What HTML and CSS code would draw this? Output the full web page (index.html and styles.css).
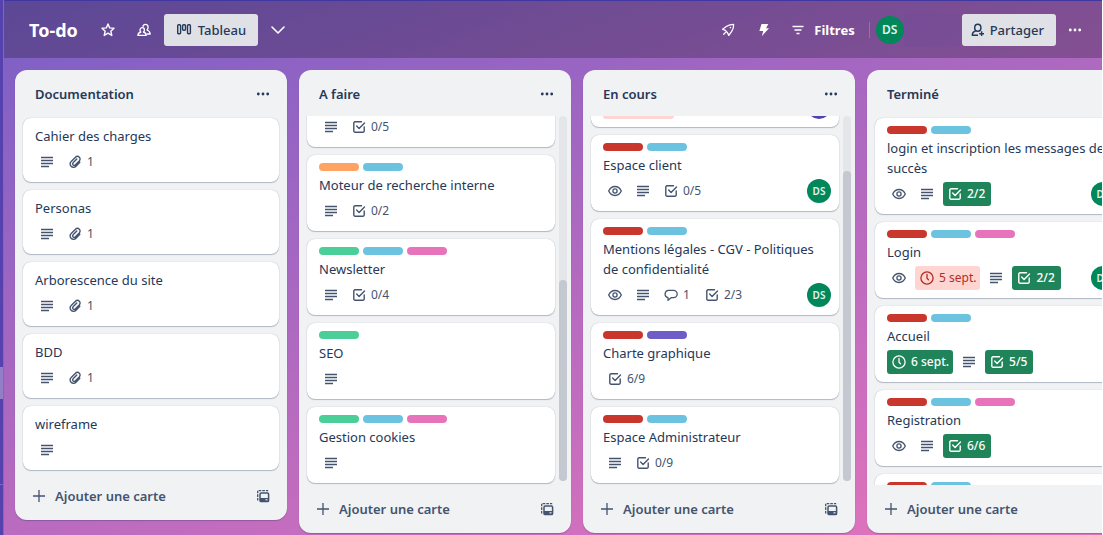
FILE: index.html
```html
<!DOCTYPE html>
<html lang="fr">
<head>
<meta charset="utf-8">
<title>To-do</title>
<link rel="stylesheet" href="styles.css">
</head>
<body>
<svg class="sprite" aria-hidden="true">
  <symbol id="desc" viewBox="0 0 16 16"><path d="M2 3.500h12M2 6.500h12M2 9.500h12M2 12.500h8" stroke="currentColor" stroke-width="1.300" fill="none"/></symbol>
  <symbol id="clip" viewBox="0 0 16 16"><path d="M12.800 8.300 9 12.200a3.300 3.300 0 0 1-4.900.1 3.300 3.300 0 0 1 .1-4.800L8.500 3.200a2.500 2.500 0 0 1 3.800 0 2.600 2.600 0 0 1 0 3.700L8.300 11a1.500 1.500 0 0 1-2.200-2.200L9.800 5.100" stroke="currentColor" stroke-width="1.400" fill="none" stroke-linecap="round"/></symbol>
  <symbol id="check" viewBox="0 0 16 16"><path d="M10.500 2.800H4A1.200 1.200 0 0 0 2.800 4v8A1.200 1.200 0 0 0 4 13.200h8a1.200 1.200 0 0 0 1.200-1.200V8" stroke="currentColor" stroke-width="1.400" fill="none" stroke-linecap="round"/><path d="m5.700 7 2.400 2.600L13.500 4" stroke="currentColor" stroke-width="1.400" fill="none" stroke-linecap="round" stroke-linejoin="round"/></symbol>
  <symbol id="eye" viewBox="0 0 16 16"><path d="M1.700 8C3 5.200 5.300 3.500 8 3.500S13 5.200 14.300 8C13 10.800 10.700 12.500 8 12.500S3 10.800 1.700 8Z" stroke="currentColor" stroke-width="1.300" fill="none"/><circle cx="8" cy="8" r="2.100" stroke="currentColor" stroke-width="1.300" fill="none"/></symbol>
  <symbol id="comment" viewBox="0 0 16 16"><path d="M5.500 3.300h5a3.700 3.700 0 0 1 0 7.400H8.200L5 13.300v-2.700a3.700 3.700 0 0 1 .5-7.300Z" stroke="currentColor" stroke-width="1.300" fill="none" stroke-linejoin="round"/></symbol>
  <symbol id="clock" viewBox="0 0 16 16"><circle cx="8" cy="8" r="6.100" stroke="currentColor" stroke-width="1.300" fill="none"/><path d="M8 4.300v4l1.500 1.500" stroke="currentColor" stroke-width="1.300" fill="none" stroke-linecap="round"/></symbol>
  <symbol id="dots" viewBox="0 0 16 16"><circle cx="3.300" cy="8" r="1.400" fill="currentColor"/><circle cx="8" cy="8" r="1.400" fill="currentColor"/><circle cx="12.700" cy="8" r="1.400" fill="currentColor"/></symbol>
  <symbol id="plus" viewBox="0 0 16 16"><path d="M8 2v12M2 8h12" stroke="currentColor" stroke-width="1.300"/></symbol>
  <symbol id="template" viewBox="0 0 16 16"><path d="M2.700 12.500V2.700h10.500" stroke="currentColor" stroke-width="1.300" stroke-dasharray="2.600 1" fill="none"/><rect x="5" y="5" width="8.600" height="8.600" rx="1.200" stroke="currentColor" stroke-width="1.500" fill="none"/><path d="M5 10h8.600v3.600H5z" fill="currentColor"/><path d="M10.500 11.800h2" stroke="#f1f2f4" stroke-width="1.100"/></symbol>
  <symbol id="star" viewBox="0 0 16 16"><path d="m8 1.900 1.700 4 4.300.4-3.200 2.900 1 4.300L8 11.200l-3.800 2.300 1-4.300L2 6.300l4.300-.4L8 1.900Z" stroke="currentColor" stroke-width="1.400" fill="none" stroke-linejoin="round"/></symbol>
  <symbol id="people" viewBox="0 0 16 16"><path d="M6.300 5.700c1.300 0 2.100 1 2.100 2.200 0 .9-.4 1.600-1 2.100 1.800.5 2.800 1.700 2.900 3.400H1.900c.1-1.700 1.100-2.900 3-3.400-.6-.5-.9-1.200-.9-2.100 0-1.200.9-2.200 2.300-2.200Z" stroke="currentColor" stroke-width="1.300" fill="none" stroke-linejoin="round"/><path d="M6.900 4.800c.2-1.600 1.200-2.500 2.600-2.500 1.600 0 2.600 1.200 2.600 3 0 1.100-.4 2-1.100 2.700 1.900.6 3 1.900 3.200 4h-3.500" stroke="currentColor" stroke-width="1.300" fill="none" stroke-linejoin="round"/></symbol>
  <symbol id="board" viewBox="0 0 16 16"><g stroke="currentColor" stroke-width="1.400" fill="none"><rect x="1.700" y="2.700" width="2.900" height="9" rx="1"/><rect x="6.600" y="2.700" width="2.900" height="5.600" rx="1"/><rect x="11.500" y="2.700" width="2.900" height="9" rx="1"/></g></symbol>
  <symbol id="chevron" viewBox="0 0 16 16"><path d="m2 5 6 6 6-6" stroke="currentColor" stroke-width="1.600" fill="none" stroke-linecap="round" stroke-linejoin="round"/></symbol>
  <symbol id="rocket" viewBox="0 0 16 16"><path d="M13.600 2.300c.2 2.700-.4 5-1.900 7L8.800 13.400 7.500 10.700 5.300 8.400 2.500 7.200 6.700 4.300c1.900-1.300 4.200-2 6.900-2Z" stroke="currentColor" stroke-width="1.300" fill="none" stroke-linejoin="round"/><path d="m5.600 10.400-1.900 1.900" stroke="currentColor" stroke-width="1.300" stroke-linecap="round"/><circle cx="10.400" cy="5.600" r=".8" fill="currentColor"/></symbol>
  <symbol id="bolt" viewBox="0 0 16 16"><path d="M5.500 2h6.800L10 6.200h3L5.800 14.300 7.200 9H3.400Z" fill="currentColor"/></symbol>
  <symbol id="filter" viewBox="0 0 16 16"><path d="M2.500 4.500h11M4.500 8h7M6.500 11.500h3" stroke="currentColor" stroke-width="1.300"/></symbol>
  <symbol id="invite" viewBox="0 0 16 16"><path d="M8 13.300H2.300c0-2.300 1.100-3.700 3.300-4.300" stroke="currentColor" stroke-width="1.500" fill="none" stroke-linejoin="round"/><ellipse cx="7.800" cy="5.800" rx="3.100" ry="3.500" stroke="currentColor" stroke-width="1.500" fill="none"/><path d="M11.600 9.300v4.800M9.200 11.700H14" stroke="currentColor" stroke-width="1.400"/></symbol>
</svg>

<div class="app">
  <nav class="rail" aria-label="Espace de travail"><span class="rail-current"></span><span class="rail-line"></span></nav>
  <div class="workspace">
    <header class="topbar">
      <h1 class="board-name">To-do</h1>
      <button class="ghost" aria-label="Favori"><svg class="icon"><use href="#star"/></svg></button>
      <button class="ghost" aria-label="Visibilité"><svg class="icon"><use href="#people"/></svg></button>
      <button class="solid view"><svg class="icon"><use href="#board"/></svg>Tableau</button>
      <button class="ghost chevron" aria-label="Vues"><svg class="icon"><use href="#chevron"/></svg></button>
      <div class="tools">
        <button class="ghost" aria-label="Power-ups"><svg class="icon"><use href="#rocket"/></svg></button>
        <button class="ghost" aria-label="Automatisation"><svg class="icon"><use href="#bolt"/></svg></button>
        <button class="ghost filters"><svg class="icon"><use href="#filter"/></svg>Filtres</button>
        <span class="divider"></span>
        <span class="avatar avatar-large">DS</span>
        <span class="members"></span>
        <button class="solid share"><svg class="icon"><use href="#invite"/></svg>Partager</button>
        <button class="ghost more" aria-label="Menu"><svg class="icon"><use href="#dots"/></svg></button>
      </div>
    </header>

    <main class="board">
      <section class="list">
        <header class="list-head"><h2>Documentation</h2><button aria-label="Actions"><svg class="icon"><use href="#dots"/></svg></button></header>
        <div class="list-body"><div class="cards">
          <article class="card"><h3>Cahier des charges</h3><div class="badges"><span class="badge"><svg class="icon"><use href="#desc"/></svg></span><span class="badge"><svg class="icon"><use href="#clip"/></svg>1</span></div></article>
          <article class="card"><h3>Personas</h3><div class="badges"><span class="badge"><svg class="icon"><use href="#desc"/></svg></span><span class="badge"><svg class="icon"><use href="#clip"/></svg>1</span></div></article>
          <article class="card"><h3>Arborescence du site</h3><div class="badges"><span class="badge"><svg class="icon"><use href="#desc"/></svg></span><span class="badge"><svg class="icon"><use href="#clip"/></svg>1</span></div></article>
          <article class="card"><h3>BDD</h3><div class="badges"><span class="badge"><svg class="icon"><use href="#desc"/></svg></span><span class="badge"><svg class="icon"><use href="#clip"/></svg>1</span></div></article>
          <article class="card"><h3>wireframe</h3><div class="badges"><span class="badge"><svg class="icon"><use href="#desc"/></svg></span></div></article>
        </div></div>
        <footer class="list-foot"><button class="add"><svg class="icon"><use href="#plus"/></svg>Ajouter une carte</button><button class="template" aria-label="Modèle"><svg class="icon"><use href="#template"/></svg></button></footer>
      </section>

      <section class="list">
        <header class="list-head"><h2>A faire</h2><button aria-label="Actions"><svg class="icon"><use href="#dots"/></svg></button></header>
        <div class="list-body"><div class="cards cards-end">
          <article class="card"><div class="badges"><span class="badge"><svg class="icon"><use href="#desc"/></svg></span><span class="badge count"><svg class="icon"><use href="#check"/></svg>0/5</span></div></article>
          <article class="card"><div class="labels"><i class="orange"></i><i class="sky"></i></div><h3>Moteur de recherche interne</h3><div class="badges"><span class="badge"><svg class="icon"><use href="#desc"/></svg></span><span class="badge count"><svg class="icon"><use href="#check"/></svg>0/2</span></div></article>
          <article class="card"><div class="labels"><i class="green"></i><i class="sky"></i><i class="pink"></i></div><h3>Newsletter</h3><div class="badges"><span class="badge"><svg class="icon"><use href="#desc"/></svg></span><span class="badge count"><svg class="icon"><use href="#check"/></svg>0/4</span></div></article>
          <article class="card"><div class="labels"><i class="green"></i></div><h3>SEO</h3><div class="badges"><span class="badge"><svg class="icon"><use href="#desc"/></svg></span></div></article>
          <article class="card"><div class="labels"><i class="green"></i><i class="sky"></i><i class="pink"></i></div><h3>Gestion cookies</h3><div class="badges"><span class="badge"><svg class="icon"><use href="#desc"/></svg></span></div></article>
        </div><div class="scrollbar"><span style="height:55%"></span></div></div>
        <footer class="list-foot"><button class="add"><svg class="icon"><use href="#plus"/></svg>Ajouter une carte</button><button class="template" aria-label="Modèle"><svg class="icon"><use href="#template"/></svg></button></footer>
      </section>

      <section class="list">
        <header class="list-head"><h2>En cours</h2><button aria-label="Actions"><svg class="icon"><use href="#dots"/></svg></button></header>
        <div class="list-body"><div class="cards cards-end">
          <article class="card"><div class="badges"><span class="badge late date-tail"></span><span class="avatar violet"></span></div></article>
          <article class="card"><div class="labels"><i class="red"></i><i class="sky"></i></div><h3>Espace client</h3><div class="badges"><span class="badge"><svg class="icon"><use href="#eye"/></svg></span><span class="badge"><svg class="icon"><use href="#desc"/></svg></span><span class="badge count"><svg class="icon"><use href="#check"/></svg>0/5</span><span class="avatar">DS</span></div></article>
          <article class="card"><div class="labels"><i class="red"></i><i class="sky"></i></div><h3>Mentions légales - CGV - Politiques de confidentialité</h3><div class="badges"><span class="badge"><svg class="icon"><use href="#eye"/></svg></span><span class="badge"><svg class="icon"><use href="#desc"/></svg></span><span class="badge count"><svg class="icon"><use href="#comment"/></svg>1</span><span class="badge count"><svg class="icon"><use href="#check"/></svg>2/3</span><span class="avatar">DS</span></div></article>
          <article class="card"><div class="labels"><i class="red"></i><i class="purple"></i></div><h3>Charte graphique</h3><div class="badges"><span class="badge count"><svg class="icon"><use href="#check"/></svg>6/9</span></div></article>
          <article class="card"><div class="labels"><i class="red"></i><i class="sky"></i></div><h3>Espace Administrateur</h3><div class="badges"><span class="badge"><svg class="icon"><use href="#desc"/></svg></span><span class="badge count"><svg class="icon"><use href="#check"/></svg>0/9</span></div></article>
        </div><div class="scrollbar"><span style="height:85%"></span></div></div>
        <footer class="list-foot"><button class="add"><svg class="icon"><use href="#plus"/></svg>Ajouter une carte</button><button class="template" aria-label="Modèle"><svg class="icon"><use href="#template"/></svg></button></footer>
      </section>

      <section class="list">
        <header class="list-head"><h2>Terminé</h2></header>
        <div class="list-body"><div class="cards">
          <article class="card"><div class="labels"><i class="red"></i><i class="sky"></i></div><h3>login et inscription les messages de succès</h3><div class="badges"><span class="badge"><svg class="icon"><use href="#eye"/></svg></span><span class="badge"><svg class="icon"><use href="#desc"/></svg></span><span class="badge count done"><svg class="icon"><use href="#check"/></svg>2/2</span><span class="avatar">DS</span></div></article>
          <article class="card"><div class="labels"><i class="red"></i><i class="sky"></i><i class="pink"></i></div><h3>Login</h3><div class="badges"><span class="badge"><svg class="icon"><use href="#eye"/></svg></span><span class="badge late"><svg class="icon"><use href="#clock"/></svg>5 sept.</span><span class="badge"><svg class="icon"><use href="#desc"/></svg></span><span class="badge count done"><svg class="icon"><use href="#check"/></svg>2/2</span><span class="avatar">DS</span></div></article>
          <article class="card"><div class="labels"><i class="red"></i><i class="sky"></i></div><h3>Accueil</h3><div class="badges"><span class="badge done"><svg class="icon"><use href="#clock"/></svg>6 sept.</span><span class="badge"><svg class="icon"><use href="#desc"/></svg></span><span class="badge count done"><svg class="icon"><use href="#check"/></svg>5/5</span></div></article>
          <article class="card"><div class="labels"><i class="red"></i><i class="sky"></i><i class="pink"></i></div><h3>Registration</h3><div class="badges"><span class="badge"><svg class="icon"><use href="#eye"/></svg></span><span class="badge"><svg class="icon"><use href="#desc"/></svg></span><span class="badge count done"><svg class="icon"><use href="#check"/></svg>6/6</span></div></article>
          <article class="card"><div class="labels"><i class="red"></i><i class="sky"></i></div></article>
        </div><div class="scrollbar"></div></div>
        <footer class="list-foot"><button class="add"><svg class="icon"><use href="#plus"/></svg>Ajouter une carte</button></footer>
      </section>
    </main>
  </div>
</div>
</body>
</html>
```

FILE: styles.css
```css
* { box-sizing: border-box; }
body {
  margin: 0;
  padding-right: 1px;
  background: #fff;
  color: #253858;
  font: 400 13px/20px "Noto Sans", "Open Sans", sans-serif;
  overflow: hidden;
}
h1, h2, h3 { margin: 0; font: inherit; }
button {
  display: flex;
  align-items: center;
  border: 0;
  padding: 0;
  background: none;
  color: inherit;
  font: inherit;
  white-space: nowrap;
}
.sprite { display: none; }
.icon { display: block; width: 16px; height: 16px; flex: none; }

.app { display: flex; height: 100vh; overflow: hidden; }
.rail {
  flex: none;
  display: flex;
  flex-direction: column;
  justify-content: flex-end;
  gap: 85px;
  width: 4px;
  padding-bottom: 50px;
  background: #5542ae;
  border-right: 1px solid #7b68c4;
}
.rail-current { height: 32px; background: #9180c8; }
.rail-line { height: 1px; background: #7b68c4; }
.workspace {
  flex: 1;
  min-width: 0;
  display: flex;
  flex-direction: column;
  border-top: 1px solid #4038a0;
  background: linear-gradient(161deg, #7a5fc5, #e774bb);
}

.topbar {
  flex: none;
  display: flex;
  align-items: center;
  height: 57px;
  padding: 0 12px 0 25px;
  background: rgba(0, 0, 0, .24);
  color: #fff;
}
.board-name { font-size: 18px; font-weight: 700; line-height: 32px; margin-right: 12px; }
.ghost { justify-content: center; height: 32px; min-width: 36px; }
.solid {
  height: 32px;
  padding: 0 12px;
  gap: 6px;
  border-radius: 3px;
  background: #dfe1e6;
  color: #253858;
  font-weight: 500;
}
.view { margin-left: 2px; }
.chevron { min-width: 40px; }
.tools { display: flex; align-items: center; margin-left: auto; }
.filters { padding: 0 14px 0 8px; gap: 8px; font-weight: 700; }
.divider { width: 1px; height: 16px; margin-right: 6px; background: rgba(255, 255, 255, .2); }
.members { width: 56px; height: 34px; margin-right: 2px; background: rgba(112, 76, 160, .3); }
.share { padding: 0 12px 0 8px; gap: 4px; }
.more { min-width: 30px; margin-left: 4px; }

.avatar {
  display: flex;
  align-items: center;
  justify-content: center;
  flex: none;
  width: 24px;
  height: 24px;
  margin-left: auto;
  border-radius: 50%;
  background: #00875a;
  color: #e3f5ec;
  font-size: 10px;
  font-weight: 600;
}
.avatar-large { width: 28px; height: 28px; margin: 0; font-size: 12px; }
.violet { background: #5243aa; }

.board {
  flex: 1;
  min-height: 0;
  display: flex;
  align-items: flex-start;
  gap: 12px;
  padding: 12px 11px 2px;
  overflow: hidden;
}
.list {
  flex: none;
  display: flex;
  flex-direction: column;
  width: 272px;
  max-height: 100%;
  padding-bottom: 8px;
  border-radius: 12px;
  background: #f1f2f4;
  box-shadow: 0 1px 1px rgba(9, 30, 66, .25);
}
.list-head {
  flex: none;
  display: flex;
  align-items: center;
  justify-content: space-between;
  height: 46px;
  padding: 2px 16px 0 20px;
  font-weight: 600;
}
.list-body { flex: 0 1 auto; min-height: 0; display: flex; padding: 0 4px; overflow: hidden; }
.cards {
  flex: 1;
  min-width: 0;
  display: flex;
  flex-direction: column;
  gap: 8px;
  padding: 2px 4px;
  overflow: hidden;
}
.cards-end { justify-content: flex-end; }
.scrollbar {
  flex: none;
  display: flex;
  flex-direction: column;
  justify-content: flex-end;
  width: 8px;
  margin-bottom: 4px;
  border-radius: 4px;
  background: #e4e6ea;
}
.scrollbar span { border-radius: 4px; background: #c3c8d1; }
.card {
  flex: none;
  display: flex;
  flex-direction: column;
  gap: 4px;
  padding: 8px 8px 8px 12px;
  border-radius: 8px;
  background: #fff;
  box-shadow: 0 1px 1px rgba(9, 30, 66, .25), 0 0 1px rgba(9, 30, 66, .31);
}
.labels { display: flex; gap: 4px; }
.labels i { width: 40px; height: 8px; border-radius: 4px; }
.orange { background: #fea362; }
.sky { background: #6cc3e0; }
.green { background: #4bce97; }
.pink { background: #e774bb; }
.red { background: #c9372c; }
.purple { background: #6e5dc6; }
.badges { display: flex; gap: 4px; }
.badge {
  display: flex;
  align-items: center;
  gap: 4px;
  height: 24px;
  padding: 0 4px;
  border-radius: 3px;
  color: #44546f;
  font-size: 12px;
}
.count { padding-right: 6px; }
.late { background: #ffd5d2; color: #ae2e24; }
.date-tail { width: 71px; }
.done { background: #1f845a; color: #fff; font-weight: 500; }

.list-foot {
  flex: none;
  display: flex;
  justify-content: space-between;
  margin-top: 8px;
  padding: 0 16px;
  color: #44546f;
  font-weight: 600;
}
.add { height: 32px; gap: 8px; }
.template { height: 32px; }
```
